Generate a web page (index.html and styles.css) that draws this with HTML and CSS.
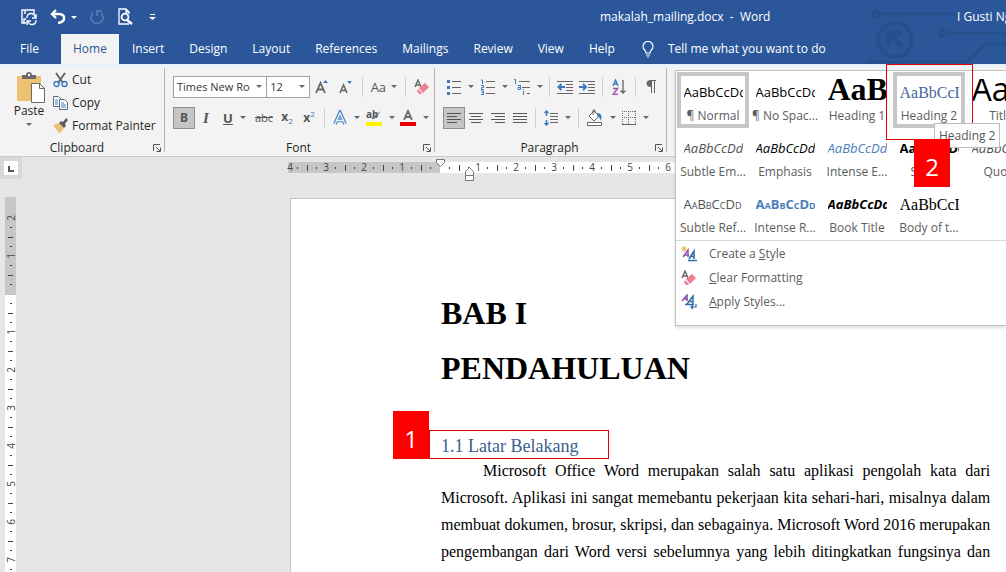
FILE: index.html
```html
<!DOCTYPE html>
<html lang="id">
<head>
<meta charset="utf-8">
<title>makalah_mailing.docx - Word</title>
<link rel="stylesheet" href="styles.css">
</head>
<body>
<header class="header">
  <svg class="circuit" viewBox="0 0 140 64" width="140" height="64" fill="none" stroke="#24508c" stroke-width="3">
    <circle cx="10" cy="14" r="3"/><path d="M14 14H91"/>
    <circle cx="29" cy="40" r="17" stroke-width="4"/>
    <path d="M36 47L24 35M23 47V33h13" stroke-width="5"/>
    <circle cx="76" cy="33" r="3"/><path d="M80 33h60M0 62h100l20-18h20"/>
  </svg>
  <div class="titlebar">
    <div class="quick">
      <button class="qbtn" aria-label="Save"><svg width="18" height="18" viewBox="0 0 18 18" fill="none" stroke="#fff" stroke-width="1.4"><path d="M6 15H2V2h12v4M5 2v4M4 15v-4h2"/><path d="M7 10a4 4 0 0 1 8-1M16 6v4h-4M16 12a4 4 0 0 1-8 1M7 17v-4h4"/></svg></button>
      <button class="qbtn" aria-label="Undo"><svg width="16" height="16" viewBox="0 0 16 16" fill="none" stroke="#fff" stroke-width="2.4"><path d="M6 1L2 5l4 4M2 5h7c7 0 7 8-1 9"/></svg><i class="caret light"></i></button>
      <button class="qbtn" aria-label="Repeat"><svg width="16" height="16" viewBox="0 0 16 16" fill="none" stroke="#4f78b8" stroke-width="2"><path d="M4 4a6 6 0 1 0 8 0M8 7V2h5"/></svg></button>
      <button class="qbtn preview" aria-label="Print preview"><svg width="16" height="18" viewBox="0 0 16 18" fill="none" stroke="#fff" stroke-width="1.3"><path d="M12 16H2V1h7l3 3v2M9 1v3h3"/><circle cx="8" cy="9" r="3.4" stroke-width="1.8"/><path d="M10 12l5 4" stroke-width="2.4"/></svg></button>
      <button class="qbtn more" aria-label="Customize"><svg width="7" height="8" viewBox="0 0 7 8"><path d="M1 1h5v1H1zM0 4h7L3.500 7z" fill="#fff"/></svg></button>
    </div>
    <div class="doc-title">makalah_mailing.docx&nbsp; -&nbsp; Word</div>
    <div class="account">I Gusti Ngurah</div>
  </div>
  <nav class="tabs">
    <a class="tab file" href="#file">File</a>
    <a class="tab active" href="#home">Home</a>
    <a class="tab" href="#insert">Insert</a>
    <a class="tab" href="#design">Design</a>
    <a class="tab" href="#layout">Layout</a>
    <a class="tab" href="#references">References</a>
    <a class="tab" href="#mailings">Mailings</a>
    <a class="tab" href="#review">Review</a>
    <a class="tab" href="#view">View</a>
    <a class="tab" href="#help">Help</a>
    <button class="tell"><svg width="12" height="17" viewBox="0 0 12 17" fill="none" stroke="#fff" stroke-width="1.2"><path d="M4 12c0-3-3-3-3-6.500a5 5 0 0 1 10 0C11 9 8 9 8 12zM4 14h4M5 16h2"/></svg>Tell me what you want to do</button>
  </nav>
</header>

<section class="ribbon">
  <div class="group clipboard">
    <div class="clip-body">
      <button class="paste">
        <svg width="28" height="31" viewBox="0 0 28 31"><path d="M0 4h24v25H0z" fill="#ecc172"/><path d="M5 7V3h4c0-4 6-4 6 0h4v4z" fill="#6a6a6a"/><circle cx="12" cy="3" r="1.200" fill="#fff"/><path d="M14.500 11.500h8l5 5v14h-13z" fill="#fff" stroke="#6a6a6a"/><path d="M22.500 11.500v5h5" fill="none" stroke="#6a6a6a"/></svg>
        <span>Paste</span><i class="caret"></i>
      </button>
      <div class="clip-list">
        <button><svg width="15" height="16" viewBox="0 0 15 16" fill="none"><path d="M3 1l7 10M12 1L5 11" stroke="#666" stroke-width="2"/><circle cx="3.500" cy="12" r="2.500" stroke="#3f79bd" stroke-width="1.400"/><circle cx="11.500" cy="12" r="2.500" stroke="#3f79bd" stroke-width="1.400"/></svg>Cut</button>
        <button><svg width="15" height="15" viewBox="0 0 15 15" fill="#fff" stroke="#5d6b80"><path d="M.5 1.500h5l3 3v7h-8z"/><path d="M2 5h3M2 7h3M2 9h3" stroke="#3f79bd"/><path d="M6.500 4.500h5l3 3v7h-8z"/><path d="M8 8h3M8 10h5M8 12h5" stroke="#3f79bd"/></svg>Copy</button>
        <button><svg width="15" height="15" viewBox="0 0 15 15"><path d="M0 7l6-2 5 5-4 5H6z" fill="#ecc172"/><path d="M6 5l2-2 2 1 3-4 2 2-3 4 1 2-2 2z" fill="#5e5e5e"/></svg>Format Painter</button>
      </div>
    </div>
    <footer class="group-name">Clipboard<button class="launch" aria-label="Clipboard settings"><svg width="8" height="8" viewBox="0 0 8 8" fill="none" stroke="#555"><path d="M.5 7V.5H7M3 3l4 4M7.500 3.500v4h-4"/></svg></button></footer>
  </div>

  <div class="group font">
    <div class="tools">
      <label class="combo family"><select aria-label="Font"><option>Times New Ro</option></select><i class="caret"></i></label>
      <label class="combo size"><select aria-label="Font size"><option>12</option></select><i class="caret"></i></label>
      <button class="t24" aria-label="Grow font"><svg width="14" height="16" viewBox="0 0 14 16"><path d="M1 14L5.500 4 10 14M3 10.500h5" fill="none" stroke="#666" stroke-width="1.800"/><path d="M8 4h5l-2.500-3z" fill="#3f79bd"/></svg></button>
      <button class="t24" aria-label="Shrink font"><svg width="14" height="16" viewBox="0 0 14 16"><path d="M1 14l3.500-8L8 14M2.500 11.500h4" fill="none" stroke="#666" stroke-width="1.600"/><path d="M8 2h5l-2.500 3z" fill="#3f79bd"/></svg></button>
      <i class="sep"></i>
      <button class="t36 case">Aa<i class="caret"></i></button>
      <i class="sep"></i>
      <button class="t24" aria-label="Clear formatting"><svg width="16" height="16" viewBox="0 0 16 16"><path d="M1 8l3-7 3 7M2 6h4" fill="none" stroke="#666" stroke-width="1.400"/><path d="M5 9l6-5 4 4-6 6zM4 10l4 4-1 1H5l-2-3z" fill="#ec7f92"/></svg></button>
    </div>
    <div class="tools">
      <button class="t22 on"><b>B</b></button>
      <button class="t22 it"><b>I</b></button>
      <button class="t36"><b class="und">U</b><i class="caret"></i></button>
      <button class="t24 strike">abc</button>
      <button class="t22"><span><b>x</b><sub>2</sub></span></button>
      <button class="t22"><span><b>x</b><sup>2</sup></span></button>
      <i class="sep"></i>
      <button class="t34" aria-label="Text effects"><svg width="14" height="16" viewBox="0 0 14 16"><path d="M2 14L7 2.500 12 14M4 10.500h6" fill="none" stroke="#4b82bf" stroke-width="3.600"/><path d="M2 14L7 3 12 14M4 10.500h6" fill="none" stroke="#e6f1fb" stroke-width="1.400"/></svg><i class="caret"></i></button>
      <button class="t34" aria-label="Highlight"><svg width="16" height="17" viewBox="0 0 16 17"><text x="0" y="9" class="glyph-ab">ab</text><path d="M15 2l-7 8-2 0 0-2z" fill="#777"/><path d="M0 13h16v4H0z" fill="#fff200"/></svg><i class="caret"></i></button>
      <button class="t34" aria-label="Font color"><svg width="16" height="17" viewBox="0 0 16 17"><path d="M4 11L8 2l4 9M5 8h6" fill="none" stroke="#666" stroke-width="1.800"/><path d="M0 13h16v4H0z" fill="#e60000"/></svg><i class="caret"></i></button>
    </div>
    <footer class="group-name">Font<button class="launch" aria-label="Font settings"><svg width="8" height="8" viewBox="0 0 8 8" fill="none" stroke="#555"><path d="M.5 7V.5H7M3 3l4 4M7.500 3.500v4h-4"/></svg></button></footer>
  </div>

  <div class="group paragraph">
    <div class="tools">
      <button class="t34" aria-label="Bullets"><svg width="14" height="16" viewBox="0 0 14 16"><path d="M5 2.500h9M5 8.500h9M5 14.500h9" stroke="#666"/><path d="M0 1h3v3H0zM0 7h3v3H0zM0 13h3v3H0z" fill="#3f79bd"/></svg><i class="caret"></i></button>
      <button class="t34" aria-label="Numbering"><svg width="14" height="16" viewBox="0 0 14 16"><path d="M5 2.500h9M5 8.500h9M5 14.500h9" stroke="#666"/><path d="M0 1h1.500v4M0 6.500h2.500v2H.5v2H3M0 12h2.500v3.500H0M1 13.500h2" fill="none" stroke="#3f79bd"/></svg><i class="caret"></i></button>
      <button class="t34" aria-label="Multilevel list"><svg width="16" height="16" viewBox="0 0 16 16"><path d="M5 2.500h11M8 8.500h8M13 14.500h3" stroke="#666"/><path d="M0 .5h1.500V5M4 6.500h2.500v4H4v-2h2M9.500 12v4M9.500 10v1" fill="none" stroke="#3f79bd"/></svg><i class="caret"></i></button>
      <i class="sep"></i>
      <button class="t22" aria-label="Decrease indent"><svg width="16" height="14" viewBox="0 0 16 14" fill="none" stroke="#666"><path d="M0 1.500h16M9 4.500h7M9 7.500h7M9 10.500h7M0 13.500h16"/><path d="M8 7H1M4.500 4L1.500 7l3 3" stroke="#3f79bd" stroke-width="2"/></svg></button>
      <button class="t22" aria-label="Increase indent"><svg width="16" height="14" viewBox="0 0 16 14" fill="none" stroke="#666"><path d="M0 1.500h16M9 4.500h7M9 7.500h7M9 10.500h7M0 13.500h16"/><path d="M0 7h7M4 4l3 3-3 3" stroke="#3f79bd" stroke-width="2"/></svg></button>
      <i class="sep"></i>
      <button class="t24" aria-label="Sort"><svg width="14" height="16" viewBox="0 0 14 16" fill="none"><path d="M1 7l2.500-6L6 7M2 5h3" stroke="#3f79bd" stroke-width="1.400"/><path d="M1 9.500h4.500L1 15.500h5" stroke="#9b4fb5" stroke-width="1.400"/><path d="M11 1v13M8.500 11.500L11 14l2.500-2.500" stroke="#666" stroke-width="1.300"/></svg></button>
      <i class="sep"></i>
      <button class="t22" aria-label="Show marks"><svg width="10" height="13" viewBox="0 0 10 13"><path d="M10 0v1H9v12H8V1H6v12H5V7C-1 7-1 0 5 0z" fill="#666"/></svg></button>
    </div>
    <div class="tools">
      <button class="t22 on" aria-label="Align left"><svg width="14" height="12" viewBox="0 0 14 12" stroke="#555"><path d="M0 1.500h14M0 4.500h10M0 7.500h14M0 10.500h10"/></svg></button>
      <button class="t22" aria-label="Center"><svg width="14" height="12" viewBox="0 0 14 12" stroke="#555"><path d="M0 1.500h14M2 4.500h10M0 7.500h14M2 10.500h10"/></svg></button>
      <button class="t22" aria-label="Align right"><svg width="14" height="12" viewBox="0 0 14 12" stroke="#555"><path d="M0 1.500h14M4 4.500h10M0 7.500h14M4 10.500h10"/></svg></button>
      <button class="t22" aria-label="Justify"><svg width="14" height="12" viewBox="0 0 14 12" stroke="#555"><path d="M0 1.500h14M0 4.500h14M0 7.500h14M0 10.500h14"/></svg></button>
      <i class="sep"></i>
      <button class="t34" aria-label="Line spacing"><svg width="14" height="16" viewBox="0 0 14 16" fill="none"><path d="M6 3.500h8M6 6.500h8M6 9.500h8M6 12.500h8" stroke="#666"/><path d="M2.500 1v5M2.500 10v5M.5 3l2-2 2 2M.5 13l2 2 2-2" stroke="#3f79bd" stroke-width="1.500"/></svg><i class="caret"></i></button>
      <i class="sep"></i>
      <button class="t36" aria-label="Shading"><svg width="17" height="17" viewBox="0 0 17 17" fill="none" stroke="#666"><path d="M3 7l5-5 5 5-5 5zM7 6V1h2v3" fill="#fff"/><path d="M11 4c5 0 5 4 4 8-1-3-2-4-4-5z" fill="#3f79bd" stroke="none"/><path d="M1.500 13.500h14v3h-14z" fill="#fff"/></svg><i class="caret"></i></button>
      <button class="t34" aria-label="Borders"><svg width="14" height="14" viewBox="0 0 14 14" fill="none" stroke="#666"><path d="M0 .5h14M0 6.500h14M.5 0v13M6.500 0v13M13.500 0v13" stroke-dasharray="1 1"/><path d="M0 13.500h14"/></svg><i class="caret"></i></button>
    </div>
    <footer class="group-name">Paragraph<button class="launch" aria-label="Paragraph settings"><svg width="8" height="8" viewBox="0 0 8 8" fill="none" stroke="#555"><path d="M.5 7V.5H7M3 3l4 4M7.500 3.500v4h-4"/></svg></button></footer>
  </div>

  <div class="styles">
    <div class="gallery">
      <div class="cells">
        <button class="cell picked"><span class="sample">AaBbCcDd</span><span class="name">¶ Normal</span></button>
        <button class="cell"><span class="sample">AaBbCcDd</span><span class="name">¶ No Spac...</span></button>
        <button class="cell"><span class="sample h1">AaBb</span><span class="name">Heading 1</span></button>
        <button class="cell picked"><span class="sample h2">AaBbCcD</span><span class="name">Heading 2</span></button>
        <button class="cell"><span class="sample title">AaB</span><span class="name">Title</span></button>
        <button class="cell"><span class="sample em soft">AaBbCcDd</span><span class="name">Subtle Em...</span></button>
        <button class="cell"><span class="sample em">AaBbCcDd</span><span class="name">Emphasis</span></button>
        <button class="cell"><span class="sample em blue">AaBbCcDd</span><span class="name">Intense E...</span></button>
        <button class="cell"><span class="sample strong">AaBbCcDd</span><span class="name">Strong</span></button>
        <button class="cell"><span class="sample em soft">AaBbCcDd</span><span class="name">Quote</span></button>
        <button class="cell"><span class="sample caps soft">AaBbCcDd</span><span class="name">Subtle Ref...</span></button>
        <button class="cell"><span class="sample caps strong blue">AaBbCcDd</span><span class="name">Intense R...</span></button>
        <button class="cell"><span class="sample em strong">AaBbCcDd</span><span class="name">Book Title</span></button>
        <button class="cell"><span class="sample body">AaBbCcD</span><span class="name">Body of t...</span></button>
      </div>
      <div class="menu">
        <button><svg width="16" height="16" viewBox="0 0 16 16" fill="none"><path d="M3 0v6M0 3h6M1 1l4 4M5 1L1 5" stroke="#e8b550"/><path d="M2 11l5-7v7M4 9h4" stroke="#9254ad" stroke-width="1.500"/><path d="M8 13l5-8v8M9 10.500h4M7 14.500h9" stroke="#336cad" stroke-width="1.600"/></svg><span>Create a <u>S</u>tyle</span></button>
        <button><svg width="16" height="16" viewBox="0 0 16 16"><path d="M1 8l3-7 3 7M2 6h4" fill="none" stroke="#666" stroke-width="1.400"/><path d="M5 9l6-5 4 4-6 6zM4 10l4 4-1 1H5l-2-3z" fill="#ec7f92"/></svg><span><u>C</u>lear Formatting</span></button>
        <button><svg width="16" height="16" viewBox="0 0 16 16" fill="none"><path d="M1 7l5-6v6M3 5h4" stroke="#9254ad" stroke-width="1.500"/><path d="M6 10l6-8v8M8 7.500h4M4 10.500h9" stroke="#336cad" stroke-width="1.500"/><path d="M15 10v3h-5M12 11l-2 2 2 2" stroke="#336cad" stroke-width="1.200"/></svg><span><u>A</u>pply Styles...</span></button>
      </div>
    </div>
    <div class="frame"></div>
    <div class="tooltip" role="tooltip">Heading 2</div>
    <div class="badge badge-two">2</div>
  </div>
</section>

<main class="work">
  <button class="tabstop" aria-label="Tab stop"><svg width="14" height="14" viewBox="0 0 14 14"><path d="M0 0h14v14H0z" fill="#fff"/><path d="M5 5v5h5" fill="none" stroke="#555" stroke-width="2"/></svg></button>
  <div class="hruler">
    <svg width="100%" height="25" class="ruler-svg">
      <defs><pattern id="ht" x="152" width="38" height="11" patternUnits="userSpaceOnUse"><path d="M9 5h1v2H9zM19 3h1v6h-1zM28 5h1v2h-1z" fill="#444"/></pattern></defs>
      <path d="M0 5h152v11H0z" fill="#c6c6c6"/><rect x="152" y="5" width="100%" height="11" fill="#fff"/>
      <svg y="5" width="100%" height="11"><rect width="100%" height="11" fill="url(#ht)"/></svg>
      <g class="nums"><text x="2" y="14">4</text><text x="38" y="14">3</text><text x="76" y="14">2</text><text x="114" y="14">1</text><text x="190" y="14">1</text><text x="228" y="14">2</text><text x="266" y="14">3</text><text x="304" y="14">4</text><text x="342" y="14">5</text><text x="380" y="14">6</text></g>
      <path d="M148.500 2.500h8v3l-4 4-4-4zM177.500 18.500v-4l4-4 4 4v4zM177.500 18.500h8v5h-8z" fill="#fff" stroke="#777"/>
    </svg>
  </div>
  <div class="vruler">
    <svg width="11" height="375" class="ruler-svg">
      <defs><pattern id="vt" y="97" width="11" height="38" patternUnits="userSpaceOnUse"><path d="M5 9h2v1H5zM3 19h5v1H3zM5 28h2v1H5z" fill="#444"/></pattern></defs>
      <path d="M0 0h11v98H0z" fill="#c6c6c6"/><path d="M0 98h11v277H0z" fill="#fff"/><path d="M0 27h11v348H0z" fill="url(#vt)"/>
      <g class="nums"><text transform="translate(10 21) rotate(-90)">2</text><text transform="translate(10 59) rotate(-90)">1</text><text transform="translate(10 135) rotate(-90)">1</text><text transform="translate(10 173) rotate(-90)">2</text><text transform="translate(10 211) rotate(-90)">3</text><text transform="translate(10 249) rotate(-90)">4</text><text transform="translate(10 287) rotate(-90)">5</text><text transform="translate(10 325) rotate(-90)">6</text><text transform="translate(10 363) rotate(-90)">7</text></g>
    </svg>
  </div>
  <article class="page">
    <h1>BAB I<br>PENDAHULUAN</h1>
    <div class="marked">
      <div class="badge badge-one">1</div>
      <h2>1.1 Latar Belakang</h2>
    </div>
    <p>Microsoft Office Word merupakan salah satu aplikasi pengolah kata dari<br>
    Microsoft. Aplikasi ini sangat memebantu pekerjaan kita sehari-hari, misalnya dalam<br>
    membuat dokumen, brosur, skripsi, dan sebagainya. Microsoft Word 2016 merupakan<br>
    pengembangan dari Word versi sebelumnya yang lebih ditingkatkan fungsinya dan</p>
  </article>
</main>
</body>
</html>
```
FILE: styles.css
```css
* { box-sizing: border-box; }
body {
  margin: 0;
  height: 100vh;
  overflow: hidden;
  display: flex;
  flex-direction: column;
  background: #e6e6e6;
  color: #262626;
  font: 12px/16px "Open Sans", "Noto Sans", sans-serif;
}
button {
  font: inherit;
  color: inherit;
  background: none;
  border: 0;
  padding: 0;
  display: flex;
  align-items: center;
  white-space: nowrap;
}
svg { display: block; flex: none; }
i { font-style: normal; }
.caret {
  flex: none;
  border: 3px solid transparent;
  border-top-color: #666;
  border-bottom: 0;
}
.caret.light { border-top-color: #fff; }

.header { position: relative; background: #2b579a; color: #fff; font-size: 12px; }
.circuit { position: absolute; right: 0; top: 0; }
.titlebar {
  position: relative;
  display: grid;
  grid-template-columns: 600px 1fr 49px;
  align-items: center;
  height: 34px;
}
.quick { display: flex; align-items: center; padding-left: 20px; gap: 12px; }
.qbtn { gap: 5px; }
.qbtn.more { margin-left: 4px; }
.doc-title, .account { white-space: nowrap; overflow: hidden; }
.tabs { position: relative; display: flex; height: 30px; gap: 1px; }
.tab {
  display: flex;
  align-items: center;
  padding: 0 12px;
  color: #fff;
  text-decoration: none;
}
.tab.file { padding: 0 21px 0 20px; }
.tab.active { background: #f3f3f3; color: #2b579a; }
.tell { padding-left: 14px; gap: 14px; }

.ribbon {
  position: relative;
  z-index: 1;
  display: flex;
  flex: none;
  height: 93px;
  padding-top: 4px;
  background: linear-gradient(#e4eefa, #f3f3f3 4px);
  border-bottom: 1px solid #cacaca;
}
.group {
  display: flex;
  flex-direction: column;
  flex: none;
  margin-bottom: 4px;
  border-right: 1px solid #b5b5b5;
}
.clipboard { width: 165px; }
.font { width: 270px; padding: 3px 0 0 8px; }
.paragraph { width: 232px; padding: 3px 0 0 8px; }
.clip-body { display: flex; }
.paste { flex-direction: column; width: 53px; padding: 4px 0 0 5px; }
.paste svg { margin-left: 4px; }
.paste .caret { margin-top: 4px; }
.clip-list { display: flex; flex-direction: column; }
.clip-list button { height: 23px; gap: 4px; }
.tools { display: flex; align-items: center; height: 31px; color: #555; }
.tools button { height: 22px; justify-content: center; }
.tools .caret { margin-left: 7px; }
.t22 { width: 22px; }
.t24 { width: 24px; }
.t34 { width: 34px; }
.t36 { width: 35px; }
.on { background: #c5c5c5; outline: 1px solid #8f8f8f; outline-offset: -1px; }
.it { font-family: "Liberation Serif", serif; font-style: italic; font-size: 15px; }
.und { text-decoration: underline; font-size: 13px; }
.strike { text-decoration: line-through; font-size: 11px; }
.case { font-size: 13px; }
.tools .case .caret { margin-left: 5px; }
.tools sub, .tools sup { font-size: 8px; line-height: 8px; color: #3f79bd; }
.glyph-ab { font: bold 10px "Open Sans", sans-serif; fill: #555; }
.sep { width: 1px; height: 20px; margin: 0 4px; background: #d0d0d0; }
.combo {
  display: flex;
  align-items: center;
  height: 22px;
  padding-right: 4px;
  border: 1px solid #a0a0a0;
  background: #fff;
}
.combo + .combo { border-left: 0; }
.family { width: 95px; }
.size { width: 43px; }
.combo select {
  appearance: none;
  flex: 1;
  min-width: 0;
  padding: 0 0 0 3px;
  border: 0;
  background: none;
  color: #333;
  font: inherit;
  font-size: 11px;
}
.tools .combo .caret { margin-left: 0; }
.group-name {
  display: flex;
  justify-content: center;
  align-items: center;
  height: 16px;
  margin-top: auto;
  margin-bottom: -4px;
}
.launch { margin-left: auto; margin-right: 3px; }
.group-name::before { content: ""; margin-right: auto; width: 1px; }

.styles { position: relative; flex: 1; min-width: 0; }
.gallery {
  position: absolute;
  top: 2px;
  left: 8px;
  right: 0;
  overflow: hidden;
  background: #fff;
  border: 1px solid #c0c0c0;
  border-right: 0;
  box-shadow: 0 2px 3px #0002;
  color: #5c5c5c;
}
.cells {
  display: grid;
  grid-template-columns: repeat(5, 72px);
  grid-auto-rows: 56px;
  padding: 1px 1px 0;
  border-bottom: 1px solid #d8d8d8;
}
.cell { flex-direction: column; padding: 7px 6px 0; overflow: hidden; }
.picked { box-shadow: inset 0 0 0 4px #c6c6c6; }
.sample {
  width: 59px;
  height: 27px;
  font-size: 13px;
  line-height: 27px;
  overflow: hidden;
  text-align: left;
  color: #000;
}
.h1 { font: bold 32px/20px "Liberation Serif", serif; }
.h2 { font: 16px/27px "Liberation Serif", serif; color: #44689c; }
.title { font: 32px/20px "Open Sans", sans-serif; }
.body { font: 16px/27px "Liberation Serif", serif; }
.em { font-style: italic; }
.strong { font-weight: bold; }
.caps { font-variant: small-caps; }
.soft { color: #505050; }
.blue { color: #4a7ebb; }
.name { line-height: 20px; }
.menu { display: flex; flex-direction: column; padding: 1px 5px 11px; }
.menu button { height: 24px; gap: 12px; }
.frame {
  position: absolute;
  top: -4px;
  left: 219px;
  width: 87px;
  height: 76px;
  border: 1px solid #e00000;
}
.tooltip {
  position: absolute;
  top: 55px;
  left: 267px;
  padding: 4px 4px 3px;
  border: 1px solid #bdbdbd;
  background: #fffffff0;
  color: #575757;
}
.badge {
  position: absolute;
  display: grid;
  place-items: end center;
  width: 36px;
  height: 48px;
  padding-bottom: 7px;
  background: #f00;
  color: #fff;
  font-size: 24px;
  line-height: 26px;
}
.badge-two { top: 71px; left: 247px; }
.badge-one { right: calc(100% + 1px); bottom: -1px; }

.work {
  flex: 1;
  min-height: 0;
  overflow: hidden;
  display: grid;
  grid-template-columns: 288px 1fr;
  grid-template-rows: 25px 1fr;
}
.tabstop { width: 22px; height: 22px; padding-left: 4px; background: #d8d8d8; }
.ruler-svg { overflow: visible; }
.hruler { min-width: 0; }
.nums { font: 10px "Open Sans", sans-serif; fill: #444; text-anchor: middle; }
.vruler { padding: 15px 0 0 5px; }
.page {
  margin: 16px 0 0 2px;
  padding: 87px 18px 0 150px;
  background: #fff;
  border: 1px solid #c4c4c4;
  border-width: 1px 0 0 1px;
  font-family: "Liberation Serif", serif;
  color: #000;
}
.page h1 { margin: 0; font-size: 32px; line-height: 55px; }
.marked {
  position: relative;
  width: 180px;
  margin: 34px 0 0 -12px;
  border: 1px solid #e00000;
}
.marked .badge { font-family: "Open Sans", sans-serif; }
.page h2 {
  margin: 0;
  padding: 3px 0 0 11px;
  font-size: 18px;
  line-height: 24px;
  font-weight: normal;
  color: #3c6090;
  white-space: nowrap;
}
.page p {
  margin: -2px 0 0;
  font-size: 16px;
  line-height: 27px;
  text-indent: 42px;
  text-align: justify;
  text-align-last: justify;
  white-space: nowrap;
}
```
